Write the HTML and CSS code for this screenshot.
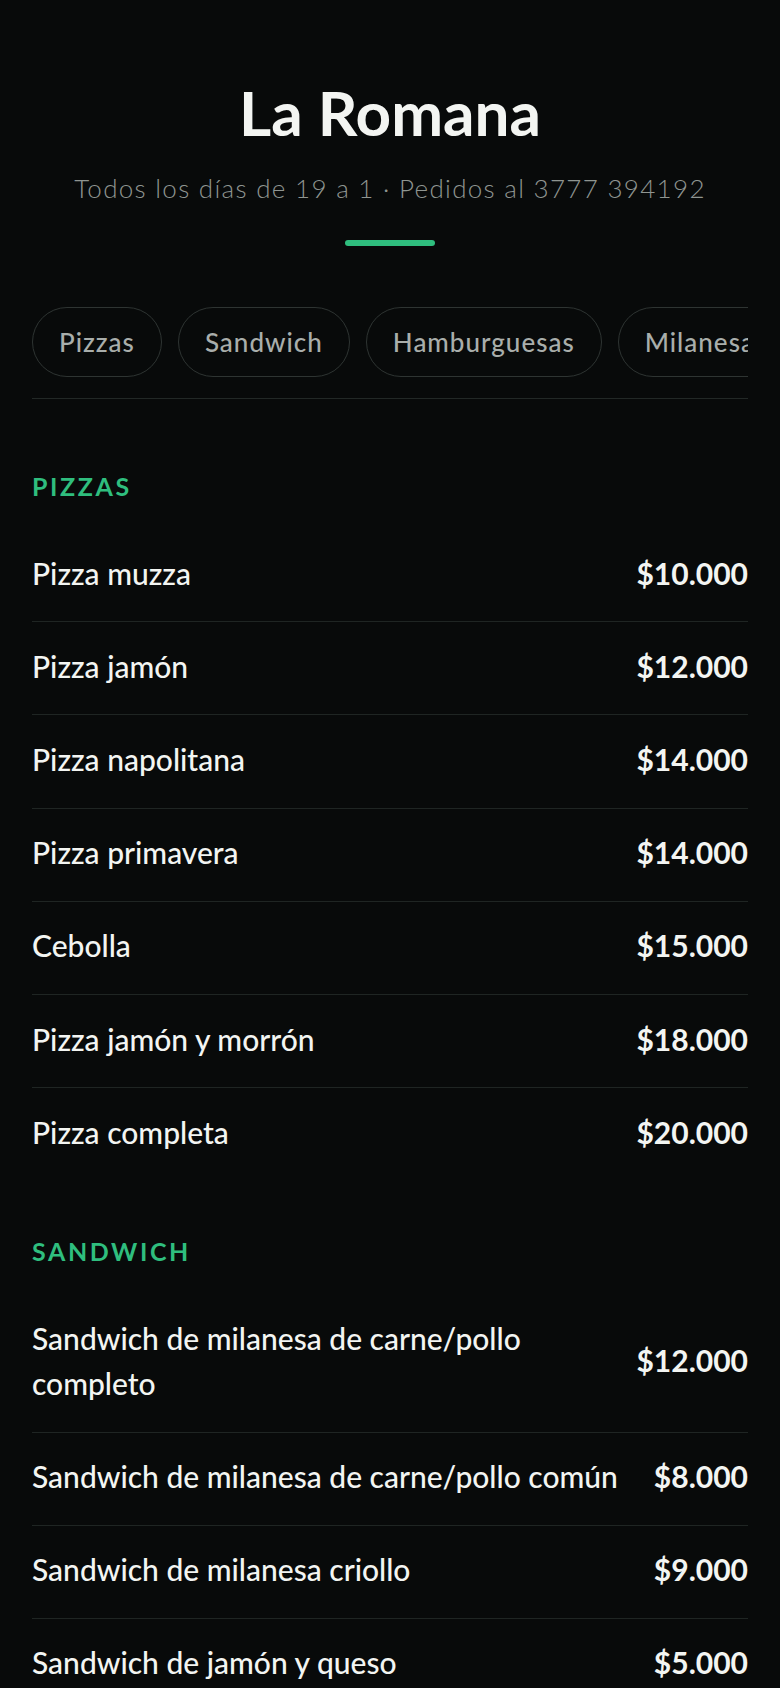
FILE: index.html
```html
<!DOCTYPE html>
<html lang="es">
<head>
  <meta charset="UTF-8" />
  <title>La Romana - Menú</title>
  <link rel="stylesheet" href="styles.css">
</head>
<body>
  <div class="page">
    <header class="header">
      <h1>La Romana</h1>
      <p class="info">Todos los días de 19 a 1 · Pedidos al 3777 394192</p>
      <div class="accent"></div>
    </header>

    <nav class="chips">
      <a class="chip" href="#pizzas">Pizzas</a>
      <a class="chip" href="#sandwich">Sandwich</a>
      <a class="chip" href="#hamburguesas">Hamburguesas</a>
      <a class="chip" href="#milanesas">Milanesas</a>
      <a class="chip" href="#empanadas">Empanadas</a>
    </nav>

    <section class="section" id="pizzas">
      <h2>Pizzas</h2>
      <ul class="items">
        <li class="item"><span class="name">Pizza muzza</span><span class="price">$10.000</span></li>
        <li class="item"><span class="name">Pizza jamón</span><span class="price">$12.000</span></li>
        <li class="item"><span class="name">Pizza napolitana</span><span class="price">$14.000</span></li>
        <li class="item"><span class="name">Pizza primavera</span><span class="price">$14.000</span></li>
        <li class="item"><span class="name">Cebolla</span><span class="price">$15.000</span></li>
        <li class="item"><span class="name">Pizza jamón y morrón</span><span class="price">$18.000</span></li>
        <li class="item"><span class="name">Pizza completa</span><span class="price">$20.000</span></li>
      </ul>
    </section>

    <section class="section" id="sandwich">
      <h2>Sandwich</h2>
      <ul class="items">
        <li class="item"><span class="name">Sandwich de milanesa de carne/pollo completo</span><span class="price">$12.000</span></li>
        <li class="item"><span class="name">Sandwich de milanesa de carne/pollo común</span><span class="price">$8.000</span></li>
        <li class="item"><span class="name">Sandwich de milanesa criollo</span><span class="price">$9.000</span></li>
        <li class="item"><span class="name">Sandwich de jamón y queso</span><span class="price">$5.000</span></li>
      </ul>
    </section>
  </div>
</body>
</html>
```

FILE: styles.css
```css
body {
  background-color: #080a0a;
  color: #f3f5f2;
  font-family: Lato, 'Noto Sans', sans-serif;
  margin: 0;
}
.page {
  padding: 76px 32px 40px;
}
.header {
  text-align: center;
  display: flex;
  flex-direction: column;
  align-items: center;
}
h1 {
  margin: 0;
  font-size: 62px;
  font-weight: 700;
  line-height: 72px;
  color: #f3f5f2;
}
.info {
  margin: 21px 0 0;
  font-size: 26px;
  font-weight: 300;
  line-height: 38px;
  letter-spacing: 1.3px;
  color: #8f9591;
}
.accent {
  width: 90px;
  height: 6px;
  border-radius: 3px;
  background-color: #2fbe7e;
  margin-top: 33px;
}
.chips {
  display: flex;
  gap: 16px;
  margin-top: 61px;
  padding-bottom: 21px;
  border-bottom: 1px solid #222826;
  overflow-x: auto;
  scrollbar-width: none;
}
.chip {
  flex-shrink: 0;
  padding: 17px 26px;
  border: 1px solid #2e3432;
  border-radius: 40px;
  font-size: 26px;
  font-weight: 500;
  line-height: 34px;
  letter-spacing: 1px;
  color: #a9aeab;
  text-decoration: none;
}
.section {
  padding-top: 72px;
}
.section + .section {
  padding-top: 56px;
}
h2 {
  margin: 0;
  font-size: 25px;
  font-weight: 700;
  line-height: 30px;
  letter-spacing: 2.6px;
  text-transform: uppercase;
  color: #2fbe7e;
}
.items {
  list-style: none;
  margin: 28px 0 0;
  padding: 0;
}
.item {
  display: flex;
  align-items: center;
  justify-content: space-between;
  gap: 24px;
  padding: 21.6px 0 25.6px;
  border-bottom: 1px solid #1f2523;
  font-size: 30px;
  line-height: 45px;
}
.item:last-child {
  border-bottom: none;
}
.name {
  font-weight: 500;
}
.price {
  flex-shrink: 0;
  font-weight: 700;
}
```
